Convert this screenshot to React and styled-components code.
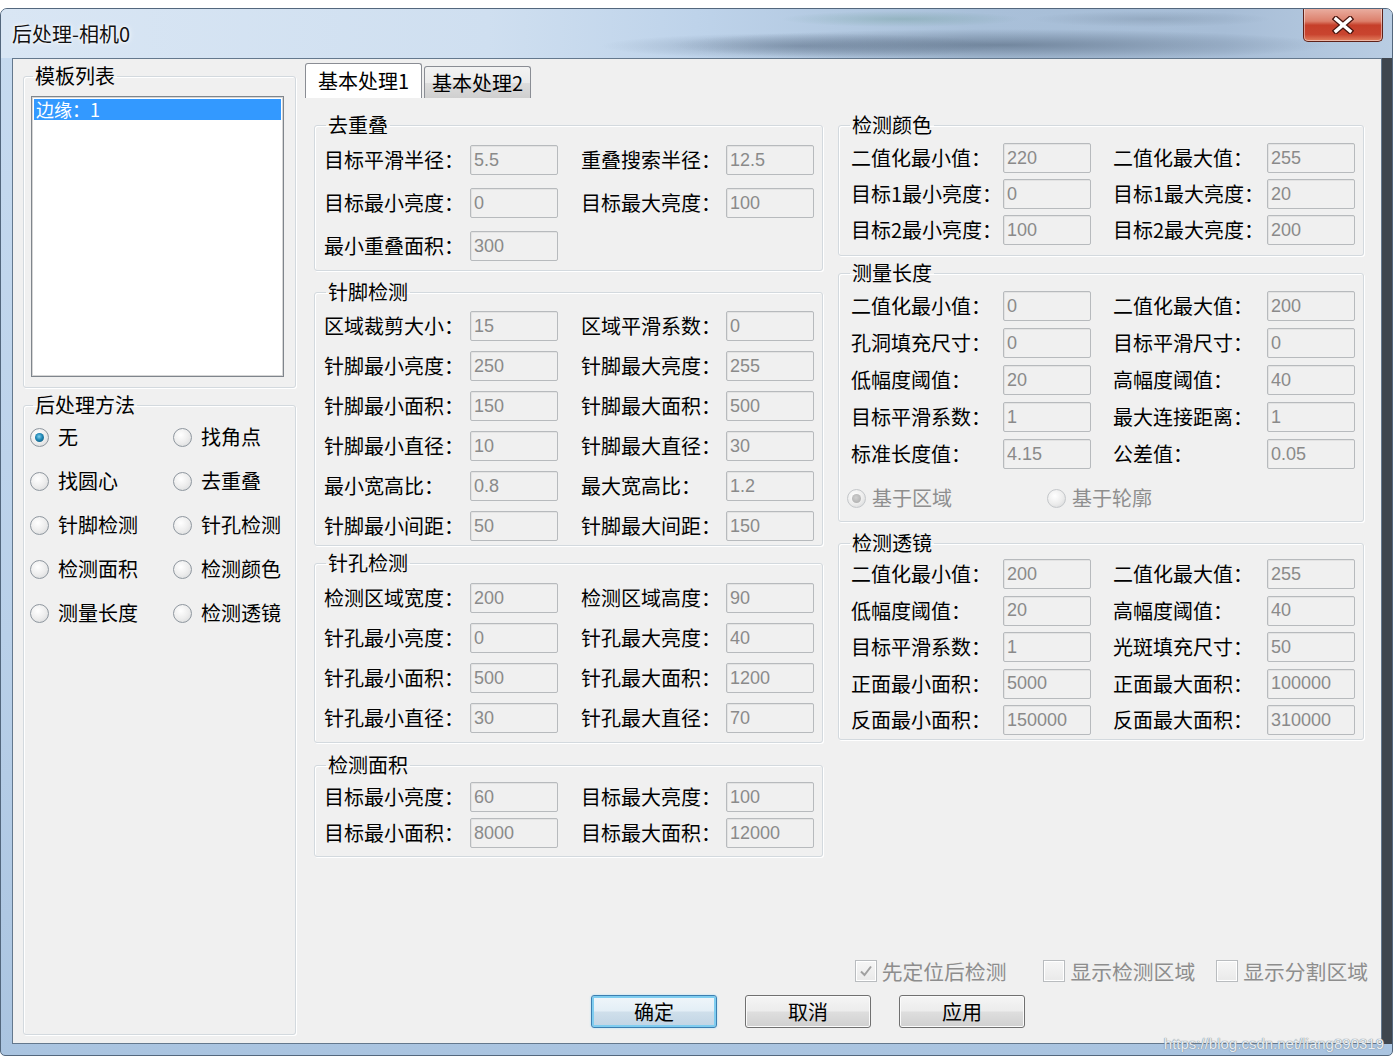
import React from 'react';
import styled, { createGlobalStyle } from 'styled-components';

const GlobalStyle = createGlobalStyle`
  html, body {
    margin: 0;
    padding: 0;
    background: #ffffff;
  }
  body {
    font-family: "Noto Sans CJK SC", "Liberation Sans", sans-serif;
    color: #000;
  }
`;

const CJK = `"Noto Sans CJK SC", "Liberation Sans", sans-serif`;

const Window = styled.div`
  position: relative;
  margin-top: 8px;
  width: 1393px;
  height: 1048px;
  box-sizing: border-box;
  border: 1px solid #53677d;
  border-radius: 7px 7px 5px 5px;
  background: linear-gradient(180deg, #c7dbf0 0%, #b9d0e9 60%, #aac4e0 100%);
  display: flex;
  flex-direction: column;
  overflow: hidden;
`;

const TitleBar = styled.div`
  height: 49px;
  flex: none;
  display: flex;
  align-items: flex-start;
  padding: 0 9px 0 11px;
  background:
    radial-gradient(ellipse 330px 16px at 1000px 36px, rgba(70, 88, 110, 0.55), transparent),
    radial-gradient(ellipse 200px 13px at 800px 37px, rgba(80, 100, 125, 0.4), transparent),
    radial-gradient(ellipse 120px 8px at 900px 10px, rgba(70, 130, 110, 0.25), transparent),
    radial-gradient(ellipse 120px 8px at 1150px 10px, rgba(90, 110, 130, 0.25), transparent),
    linear-gradient(90deg, #d9e6f4 0%, #cfdff0 35%, #bed3ea 50%, #a9c0d9 70%, #a7bdd6 88%, #b9cde3 100%);
`;

const Title = styled.div`
  padding-top: 12px;
  font-family: ${CJK};
  font-size: 20px;
  line-height: 26px;
  color: #111;
  text-shadow: 0 0 6px #ffffff, 0 0 3px #ffffff;
`;

const CloseBtn = styled.div`
  margin-left: auto;
  margin-top: -1px;
  width: 80px;
  height: 34px;
  box-sizing: border-box;
  border: 1px solid #5e2119;
  border-top: none;
  border-radius: 0 0 5px 5px;
  background: linear-gradient(180deg, #eab0a3 0%, #dc7f6b 40%, #c63f2a 52%, #c9442f 80%, #e2805f 100%);
  box-shadow: inset 0 0 0 1px rgba(255, 255, 255, 0.45);
  display: flex;
  align-items: center;
  justify-content: center;
`;

const Frame = styled.div`
  flex: 1;
  display: flex;
  padding: 0 10px 11px 11px;
  min-height: 0;
`;

const Client = styled.div`
  flex: 1;
  display: flex;
  box-sizing: border-box;
  border: 1px solid #64788d;
  background: #f0f0f0;
  padding: 4px 0 0 10px;
  box-shadow: 10px 0 0 #3f464e;
`;

const LeftCol = styled.div`
  width: 273px;
  flex: none;
  display: flex;
  flex-direction: column;
  padding: 1px 0 8px;
`;

const Group = styled.fieldset`
  margin: ${p => p.$mt || 0}px 0 0;
  padding: 0;
  border: 1px solid #d3d9de;
  border-radius: 3px;
  box-shadow: inset 1px 1px 0 #ffffff, 1px 1px 0 #ffffff;
  min-width: 0;
  flex: ${p => (p.$grow ? 1 : 'none')};
`;

const Legend = styled.legend`
  margin-left: ${p => p.$ml ?? 11}px;
  padding: 0 2px;
  font-family: ${CJK};
  font-size: 20px;
  line-height: 24px;
  color: #000;
`;

const ListBox = styled.div`
  margin: 8px 0 10px 7px;
  width: 253px;
  height: 281px;
  box-sizing: border-box;
  border: 1px solid #7f858c;
  box-shadow: inset 0 0 0 1px #d6d6d6;
  background: #ffffff;
  padding: 2px;
`;

const ListItem = styled.div`
  height: 21px;
  background: ${p => (p.$selected ? '#3399ff' : 'transparent')};
  color: ${p => (p.$selected ? '#ffffff' : '#000')};
  font-family: ${CJK};
  font-size: 18px;
  line-height: 21px;
  padding-left: 2px;
`;

const MethodGrid = styled.div`
  display: grid;
  grid-template-columns: 143px 120px;
  grid-auto-rows: 22px;
  row-gap: 22px;
  padding: 9px 0 0 6px;
`;

const RadioItem = styled.div`
  display: flex;
  align-items: center;
  gap: ${p => p.$gap ?? 9}px;
  width: ${p => (p.$w ? `${p.$w}px` : 'auto')};
  font-family: ${CJK};
  font-size: 20px;
  line-height: 22px;
  white-space: nowrap;
  color: ${p => (p.$disabled ? '#8e8e8e' : '#000')};
`;

const RadioDot = styled.span`
  flex: none;
  width: 19px;
  height: 19px;
  box-sizing: border-box;
  border-radius: 50%;
  border: 1px solid ${p => (p.$disabled ? '#c4c7ca' : '#8f979f')};
  background: radial-gradient(circle at 40% 35%, #ffffff 0%, #ececec 55%, #d2d4d6 100%);
  display: flex;
  align-items: center;
  justify-content: center;
  &::after {
    content: '';
    display: ${p => (p.$on ? 'block' : 'none')};
    width: 9px;
    height: 9px;
    border-radius: 50%;
    background: ${p =>
      p.$disabled
        ? 'radial-gradient(circle at 45% 40%, #d0d0d0 0%, #a8a8a8 100%)'
        : 'radial-gradient(circle at 45% 40%, #7fd0ee 0%, #1f86b4 45%, #0c4d6b 100%)'};
  }
`;

const RightArea = styled.div`
  flex: 1;
  margin-left: 9px;
  display: flex;
  flex-direction: column;
  min-width: 0;
`;

const TabStrip = styled.div`
  height: 35px;
  flex: none;
  display: flex;
  align-items: flex-end;
  gap: 2px;
`;

const Tab = styled.div`
  height: ${p => (p.$active ? 35 : 32)}px;
  box-sizing: border-box;
  padding: 0 ${p => (p.$active ? 12 : 7)}px;
  border: 1px solid #8a8d94;
  border-bottom: none;
  border-radius: 3px 3px 0 0;
  background: ${p =>
    p.$active ? '#ffffff' : 'linear-gradient(180deg, #f3f3f3 0%, #ebebeb 50%, #dddddd 51%, #cfcfcf 100%)'};
  font-family: ${CJK};
  font-size: 20px;
  line-height: ${p => (p.$active ? 33 : 32)}px;
  white-space: nowrap;
`;

const Pane = styled.div`
  flex: 1;
  display: flex;
  align-items: flex-start;
  gap: 15px;
  padding: 15px 0 0 9px;
`;

const Column = styled.div`
  width: ${p => p.$w}px;
  flex: none;
  display: flex;
  flex-direction: column;
`;

const Fields = styled.div`
  display: grid;
  grid-template-columns: ${p => p.$c1}px ${p => p.$c2}px;
  column-gap: ${p => p.$sep}px;
  row-gap: ${p => p.$gap}px;
  padding: ${p => p.$pad};
`;

const Pair = styled.div`
  display: flex;
  align-items: center;
`;

const Label = styled.span`
  width: ${p => p.$w}px;
  flex: none;
  font-family: ${CJK};
  font-size: 20px;
  line-height: 24px;
  white-space: nowrap;
`;

const Edit = styled.input`
  width: 88px;
  height: 30px;
  box-sizing: border-box;
  margin: 0;
  border: 1px solid #b7babd;
  border-radius: 2px;
  background: #f0f0f0;
  box-shadow: inset 1px 1px 0 #e3e3e3;
  padding: 0 0 0 3px;
  font-family: "Liberation Sans", sans-serif;
  font-size: 18px;
  color: #8a8a8a;
  outline: none;
`;

const RadioRow = styled.div`
  display: flex;
  padding: 18px 0 12px 8px;
`;

const CheckRow = styled.div`
  display: flex;
  justify-content: flex-end;
  align-items: center;
  height: 26px;
  margin-bottom: 11px;
  padding-right: 13px;
`;

const CheckItem = styled.div`
  display: flex;
  align-items: center;
  gap: 5px;
  margin-right: ${p => p.$space || 0}px;
  font-family: ${CJK};
  font-size: 20.8px;
  line-height: 26px;
  color: #8d8d8d;
  white-space: nowrap;
`;

const CheckBox = styled.span`
  width: 22px;
  height: 22px;
  box-sizing: border-box;
  border: 1px solid #b9bcbf;
  background: linear-gradient(180deg, #f6f6f6 0%, #e9e9e9 100%);
  box-shadow: inset 0 0 0 1px #ffffff;
  display: flex;
  align-items: center;
  justify-content: center;
`;

const ButtonRow = styled.div`
  display: flex;
  gap: 28px;
  padding: 0 0 15px 286px;
`;

const Button = styled.div`
  width: 126px;
  height: 33px;
  box-sizing: border-box;
  border: 1px solid ${p => (p.$default ? '#3c7fb1' : '#707070')};
  border-radius: 3px;
  background: ${p =>
    p.$default
      ? 'linear-gradient(180deg, #f0f6fa 0%, #e3eef6 48%, #cfdfeb 52%, #c0d4e4 100%)'
      : 'linear-gradient(180deg, #f5f5f5 0%, #ececec 48%, #dedede 52%, #d0d0d0 100%)'};
  box-shadow: ${p =>
    p.$default ? 'inset 0 0 0 2px #7fcdf0, 0 0 2px #9fdcf7' : 'inset 0 0 0 1px #fbfbfb'};
  display: flex;
  align-items: center;
  justify-content: center;
  font-family: ${CJK};
  font-size: 20px;
  color: #000;
`;

const Watermark = styled.div`
  position: absolute;
  right: 8px;
  bottom: 3px;
  font-family: "Liberation Sans", sans-serif;
  font-size: 15px;
  line-height: 16px;
  color: #e8eef4;
  text-shadow: 0 0 1px #7c8791, 0 0 1px #7c8791;
`;

const MID = { c1: 234, c2: 233, sep: 23, l1: 146, l2: 145, pad: 9 };
const RIGHT = { c1: 240, c2: 242, sep: 22, l1: 152, l2: 154, pad: 12 };

const midGroups = [
  {
    title: '去重叠', mt: 0, gap: 13, top: 8, bottom: 9,
    rows: [
      [['目标平滑半径：', '5.5'], ['重叠搜索半径：', '12.5']],
      [['目标最小亮度：', '0'], ['目标最大亮度：', '100']],
      [['最小重叠面积：', '300']],
    ],
  },
  {
    title: '针脚检测', mt: 9, gap: 10, top: 7, bottom: 4,
    rows: [
      [['区域裁剪大小：', '15'], ['区域平滑系数：', '0']],
      [['针脚最小亮度：', '250'], ['针脚最大亮度：', '255']],
      [['针脚最小面积：', '150'], ['针脚最大面积：', '500']],
      [['针脚最小直径：', '10'], ['针脚最大直径：', '30']],
      [['最小宽高比：', '0.8'], ['最大宽高比：', '1.2']],
      [['针脚最小间距：', '50'], ['针脚最大间距：', '150']],
    ],
  },
  {
    title: '针孔检测', mt: 5, gap: 10, top: 8, bottom: 9,
    rows: [
      [['检测区域宽度：', '200'], ['检测区域高度：', '90']],
      [['针孔最小亮度：', '0'], ['针孔最大亮度：', '40']],
      [['针孔最小面积：', '500'], ['针孔最大面积：', '1200']],
      [['针孔最小直径：', '30'], ['针孔最大直径：', '70']],
    ],
  },
  {
    title: '检测面积', mt: 10, gap: 6, top: 5, bottom: 8,
    rows: [
      [['目标最小亮度：', '60'], ['目标最大亮度：', '100']],
      [['目标最小面积：', '8000'], ['目标最大面积：', '12000']],
    ],
  },
];

const rightGroups = [
  {
    title: '检测颜色', mt: 0, gap: 6, top: 6, bottom: 10,
    rows: [
      [['二值化最小值：', '220'], ['二值化最大值：', '255']],
      [['目标1最小亮度：', '0'], ['目标1最大亮度：', '20']],
      [['目标2最小亮度：', '100'], ['目标2最大亮度：', '200']],
    ],
  },
  {
    title: '测量长度', mt: 5, gap: 7, top: 6, bottom: 0, radios: true,
    rows: [
      [['二值化最小值：', '0'], ['二值化最大值：', '200']],
      [['孔洞填充尺寸：', '0'], ['目标平滑尺寸：', '0']],
      [['低幅度阈值：', '20'], ['高幅度阈值：', '40']],
      [['目标平滑系数：', '1'], ['最大连接距离：', '1']],
      [['标准长度值：', '4.15'], ['公差值：', '0.05']],
    ],
  },
  {
    title: '检测透镜', mt: 9, gap: 6.5, top: 4, bottom: 4,
    rows: [
      [['二值化最小值：', '200'], ['二值化最大值：', '255']],
      [['低幅度阈值：', '20'], ['高幅度阈值：', '40']],
      [['目标平滑系数：', '1'], ['光斑填充尺寸：', '50']],
      [['正面最小面积：', '5000'], ['正面最大面积：', '100000']],
      [['反面最小面积：', '150000'], ['反面最大面积：', '310000']],
    ],
  },
];

const methods = [
  ['无', true], ['找角点'], ['找圆心'], ['去重叠'], ['针脚检测'],
  ['针孔检测'], ['检测面积'], ['检测颜色'], ['测量长度'], ['检测透镜'],
];

function FieldGroup({ g, v }) {
  return (
    <Group $mt={g.mt}>
      <Legend>{g.title}</Legend>
      <Fields
        $c1={v.c1}
        $c2={v.c2}
        $sep={v.sep}
        $gap={g.gap}
        $pad={`${g.top}px 0 ${g.bottom}px ${v.pad}px`}
      >
        {g.rows.map((row, i) => (
          <React.Fragment key={i}>
            {row.map(([label, value], j) => (
              <Pair key={j}>
                <Label $w={j === 0 ? v.l1 : v.l2}>{label}</Label>
                <Edit readOnly value={value} />
              </Pair>
            ))}
          </React.Fragment>
        ))}
      </Fields>
      {g.radios && (
        <RadioRow>
          <RadioItem $disabled $gap={6} $w={200}>
            <RadioDot $on $disabled />
            基于区域
          </RadioItem>
          <RadioItem $disabled $gap={6}>
            <RadioDot $disabled />
            基于轮廓
          </RadioItem>
        </RadioRow>
      )}
    </Group>
  );
}

export default function App() {
  return (
    <>
      <GlobalStyle />
      <Window>
        <TitleBar>
          <Title>后处理-相机0</Title>
          <CloseBtn>
            <svg width="22" height="18" viewBox="0 0 22 18">
              <path d="M4 3 L18 15 M18 3 L4 15" stroke="#4a1610" strokeWidth="6" strokeLinecap="square" />
              <path d="M4 3 L18 15 M18 3 L4 15" stroke="#ffffff" strokeWidth="3.4" strokeLinecap="square" />
            </svg>
          </CloseBtn>
        </TitleBar>
        <Frame>
          <Client>
            <LeftCol>
              <Group>
                <Legend $ml={9}>模板列表</Legend>
                <ListBox>
                  <ListItem $selected>边缘：1</ListItem>
                </ListBox>
              </Group>
              <Group $mt={5} $grow>
                <Legend $ml={9}>后处理方法</Legend>
                <MethodGrid>
                  {methods.map(([name, on]) => (
                    <RadioItem key={name}>
                      <RadioDot $on={on} />
                      {name}
                    </RadioItem>
                  ))}
                </MethodGrid>
              </Group>
            </LeftCol>
            <RightArea>
              <TabStrip>
                <Tab $active>基本处理1</Tab>
                <Tab>基本处理2</Tab>
              </TabStrip>
              <Pane>
                <Column $w={509}>
                  {midGroups.map(g => (
                    <FieldGroup key={g.title} g={g} v={MID} />
                  ))}
                </Column>
                <Column $w={526}>
                  {rightGroups.map(g => (
                    <FieldGroup key={g.title} g={g} v={RIGHT} />
                  ))}
                </Column>
              </Pane>
              <CheckRow>
                <CheckItem $space={37}>
                  <CheckBox>
                    <svg width="16" height="16" viewBox="0 0 16 16">
                      <path d="M3 8.5 L6.5 12 L13 3.5" fill="none" stroke="#a0a0a0" strokeWidth="2" />
                    </svg>
                  </CheckBox>
                  先定位后检测
                </CheckItem>
                <CheckItem $space={21}>
                  <CheckBox />
                  显示检测区域
                </CheckItem>
                <CheckItem>
                  <CheckBox />
                  显示分割区域
                </CheckItem>
              </CheckRow>
              <ButtonRow>
                <Button $default>确定</Button>
                <Button>取消</Button>
                <Button>应用</Button>
              </ButtonRow>
            </RightArea>
          </Client>
        </Frame>
        <Watermark>https://blog.csdn.net/liang890319</Watermark>
      </Window>
    </>
  );
}
